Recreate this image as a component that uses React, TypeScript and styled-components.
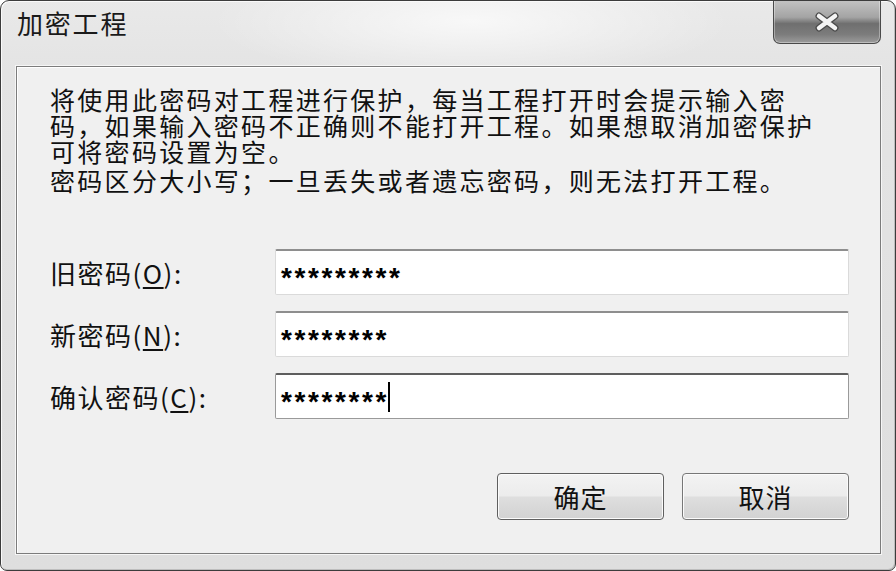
import React from 'react';
import styled, { createGlobalStyle } from 'styled-components';

const GlobalStyle = createGlobalStyle`
  html, body {
    margin: 0;
    padding: 0;
    background: #ffffff;
  }
  body {
    font-family: "Noto Sans CJK SC", "Liberation Sans", sans-serif;
    color: #111111;
  }
`;

const Window = styled.div`
  box-sizing: border-box;
  width: 896px;
  height: 571px;
  display: flex;
  flex-direction: column;
  border: 1px solid #3c3c3c;
  border-radius: 9px 9px 7px 7px;
  background:
    radial-gradient(ellipse 260px 60px at 470px 20px, rgba(255, 255, 255, 0.7), rgba(255, 255, 255, 0)),
    linear-gradient(to bottom, #e9e9e9 0%, #e4e4e4 12%, #dedede 100%);
  box-shadow: inset 1px 1px 0 #fafafa, inset -1px -1px 0 #bdbdbd;
  overflow: hidden;
`;

const TitleBar = styled.div`
  height: 65px;
  display: flex;
  align-items: flex-start;
  padding-left: 16px;
`;

const Title = styled.div`
  margin-top: 7px;
  font-size: 26px;
  line-height: 30px;
  letter-spacing: 1.8px;
  color: #1a1a1a;
`;

const CloseButton = styled.div`
  margin-left: auto;
  margin-right: 14px;
  margin-top: -1px;
  box-sizing: border-box;
  width: 108px;
  height: 44px;
  display: flex;
  align-items: center;
  justify-content: center;
  border: 1px solid #4a4a4a;
  border-top: none;
  border-radius: 0 0 7px 7px;
  background: linear-gradient(
    to bottom,
    #c4c4c4 0%,
    #a4a4a4 40%,
    #6f6f6f 55%,
    #7c7c7c 80%,
    #9c9c9c 100%
  );
  box-shadow: inset 0 0 0 1px rgba(255, 255, 255, 0.35);
`;

const Client = styled.div`
  flex: 1;
  margin: 0 14px 16px 15px;
  display: flex;
  flex-direction: column;
  padding: 19px 31px 0 33px;
  background: #f0f0f0;
  border: 1px solid #7c7c7c;
  box-shadow: inset 1px 1px 0 #ffffff, 0 0 0 1px #f6f6f6;
`;

const Message = styled.div`
  font-size: 25px;
  line-height: 26px;
  letter-spacing: 2.3px;
  white-space: nowrap;
  color: #111111;
`;

const Line = styled.div<{ $gap?: number }>`
  height: 26px;
  margin-top: ${(p) => p.$gap || 0}px;
`;

const Form = styled.div`
  margin-top: 56px;
  display: flex;
  flex-direction: column;
  gap: 16px;
`;

const Row = styled.div`
  display: flex;
  align-items: center;
`;

const Label = styled.div`
  width: 225px;
  font-size: 26px;
  letter-spacing: 1.5px;
  white-space: nowrap;
  color: #111111;
`;

const Key = styled.span`
  text-decoration: underline;
  text-underline-offset: 3px;
`;

const Field = styled.div<{ $focused?: boolean }>`
  box-sizing: border-box;
  flex: 1;
  height: 46px;
  display: flex;
  align-items: center;
  padding: 11px 0 0 5px;
  background: #ffffff;
  border: 1px solid ${(p) => (p.$focused ? '#9a9a9a' : '#dadada')};
  border-top: 2px solid ${(p) => (p.$focused ? '#5e5e5e' : '#8e8e8e')};
  border-radius: 2px;
`;

const Stars = styled.span`
  font-family: "Liberation Sans", sans-serif;
  font-weight: bold;
  font-size: 28px;
  line-height: 28px;
  letter-spacing: 2.6px;
  color: #000000;
`;

const Caret = styled.span`
  width: 2px;
  height: 30px;
  margin: -11px 0 0 -1px;
  background: #000000;
`;

const Buttons = styled.div`
  margin-top: 54px;
  display: flex;
  justify-content: flex-end;
  gap: 18px;
`;

const Button = styled.div<{ $default?: boolean }>`
  box-sizing: border-box;
  width: 167px;
  height: 47px;
  display: flex;
  align-items: center;
  justify-content: center;
  font-size: 26px;
  letter-spacing: 1px;
  color: #111111;
  border: 1px solid ${(p) => (p.$default ? '#5f5f5f' : '#777777')};
  border-radius: 4px;
  background: linear-gradient(
    to bottom,
    #f3f3f3 0%,
    #ececec 48%,
    #dedede 52%,
    #d2d2d2 100%
  );
  box-shadow: inset 0 0 0 1px #fbfbfb;
`;

const CloseIcon = () => (
  <svg width="26" height="20" viewBox="-13 -10 26 20">
    <path d="M-8 -6 L8 6 M8 -6 L-8 6" stroke="#4a4a4a" strokeWidth="7" strokeLinecap="round" />
    <path d="M-8 -6 L8 6 M8 -6 L-8 6" stroke="#f4f4f4" strokeWidth="4.5" strokeLinecap="round" />
  </svg>
);

const fields = [
  { label: '旧密码', key: 'O', value: '*********' },
  { label: '新密码', key: 'N', value: '********' },
  { label: '确认密码', key: 'C', value: '********', focused: true },
];

export default function App() {
  return (
    <>
      <GlobalStyle />
      <Window>
        <TitleBar>
          <Title>加密工程</Title>
          <CloseButton>
            <CloseIcon />
          </CloseButton>
        </TitleBar>
        <Client>
          <Message>
            <Line>将使用此密码对工程进行保护，每当工程打开时会提示输入密</Line>
            <Line>码，如果输入密码不正确则不能打开工程。如果想取消加密保护</Line>
            <Line>可将密码设置为空。</Line>
            <Line $gap={3}>密码区分大小写；一旦丢失或者遗忘密码，则无法打开工程。</Line>
          </Message>
          <Form>
            {fields.map((f) => (
              <Row key={f.key}>
                <Label>
                  {f.label}(<Key>{f.key}</Key>):
                </Label>
                <Field $focused={f.focused}>
                  <Stars>{f.value}</Stars>
                  {f.focused && <Caret />}
                </Field>
              </Row>
            ))}
          </Form>
          <Buttons>
            <Button $default>确定</Button>
            <Button>取消</Button>
          </Buttons>
        </Client>
      </Window>
    </>
  );
}
